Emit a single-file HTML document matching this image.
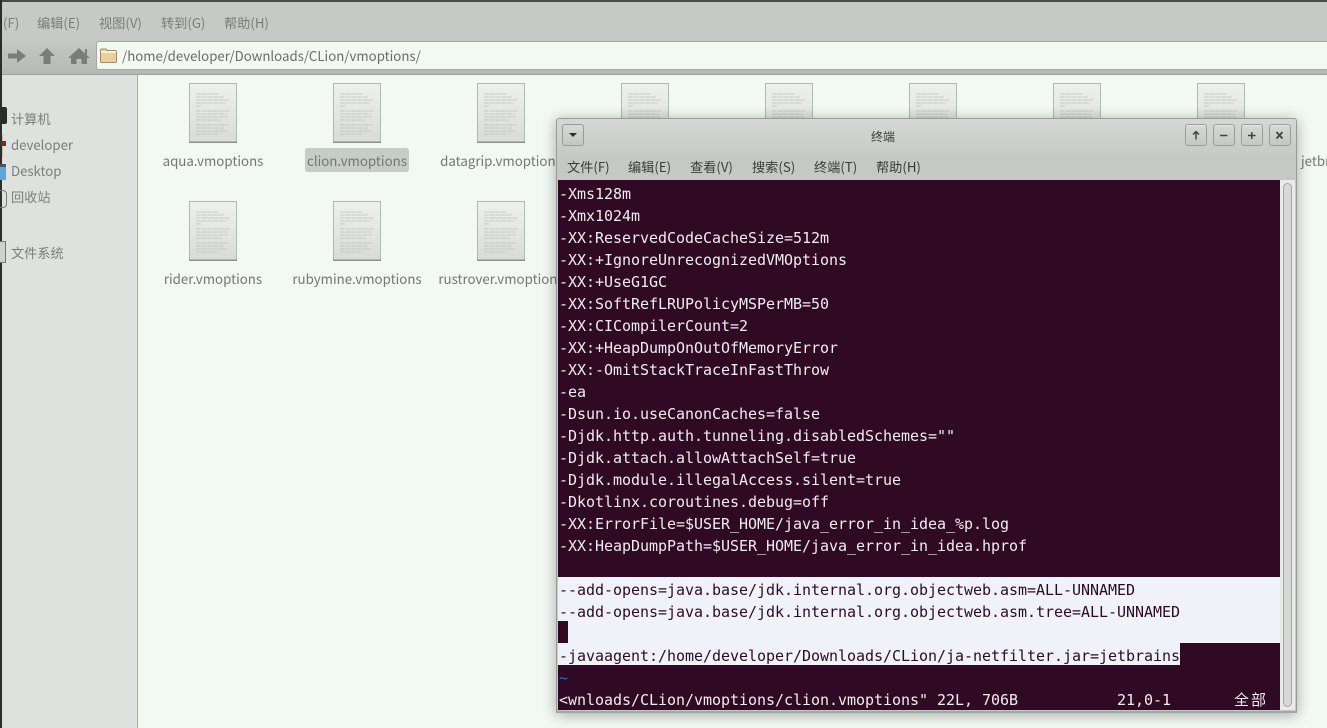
<!DOCTYPE html>
<html><head><meta charset="utf-8"><style>
html,body{margin:0;padding:0;width:1327px;height:728px;overflow:hidden;background:#f2f8f2;font-family:"Noto Sans CJK SC","Liberation Sans",sans-serif}
div,span,svg{position:absolute}
#root{left:0;top:0;width:1327px;height:728px;overflow:hidden;filter:blur(.3px)}
.t{white-space:nowrap;line-height:20px}
.m{font-size:13.2px;color:#7a7d7a;top:13px}
.lbl{font-size:13.3px;color:#747774;width:144px;text-align:center;white-space:nowrap;line-height:20px}
.side{font-size:13.2px;color:#7b7e7b;left:11px;white-space:nowrap;line-height:20px}
.tm{font-size:13.2px;color:#3c3c3c;top:157px;white-space:nowrap;line-height:20px}
.btn{top:124px;width:20px;height:20px;border:1px solid #9a9d9a;border-radius:3px;background:linear-gradient(#d6d9d6,#c4c7c4);box-shadow:inset 0 1px 0 #e6e8e6}
.l{left:559px;height:22px;line-height:22px;font-family:"DejaVu Sans Mono",monospace;font-size:15px;letter-spacing:-.03px;color:#eeeeec;white-space:pre}
.d{color:#300a24}
</style></head><body>
<svg width="0" height="0" style="left:0;top:0"><defs>
<linearGradient id="dg" x1="0" y1="0" x2="0" y2="1"><stop offset="0" stop-color="#eef0ec"/><stop offset="1" stop-color="#d9dbd8"/></linearGradient>
<symbol id="doc" viewBox="0 0 48 60">
<rect x=".5" y=".5" width="47" height="59" fill="url(#dg)" stroke="#b4b6b3"/>
<rect x="0" y="58.500" width="48" height="1.500" fill="#8d908c"/>
<g stroke="#bcbebb" stroke-width=".7" stroke-dasharray="5 .7">
<path d="M7 11H30M7 14H35M7 17H40M7 20H37M7 23H13M7 28H40M7 31H38M7 34H39M7 37H32M7 42H40M7 45H35M7 48H38M7 51H29"/>
</g></symbol></defs></svg>
<div id="root">
<!-- window chrome -->
<div style="left:0;top:0;width:1327px;height:2px;background:#4a4a48"></div>
<div style="left:2px;top:2px;width:1325px;height:36px;background:#c6c9c6"></div>
<div style="left:2px;top:38px;width:1325px;height:36px;background:linear-gradient(#c6c9c6,#b5b8b5)"></div>
<div style="left:2px;top:74px;width:1325px;height:1px;background:#9fa29f"></div>
<div style="left:0;top:0;width:2px;height:728px;background:#2d2d2d"></div>
<div class="t m" style="left:3px">(F)</div>
<div class="t m" style="left:37px">编辑(E)</div>
<div class="t m" style="left:99px">视图(V)</div>
<div class="t m" style="left:161px">转到(G)</div>
<div class="t m" style="left:224px">帮助(H)</div>

<svg style="left:6px;top:46px" width="84" height="20" viewBox="0 0 84 20" fill="#7a7d7a">
<path d="M2 7.500H11V3L20 10 11 17V12.500H2Z"/>
<path d="M41 2L49 10H44.500V18H37.500V10H33Z"/>
<path d="M73 2L79 7.500V3H81V9.500L84 12H81V18H75.500V13H70.500V18H65V12H62Z"/>
</svg>
<div style="left:96px;top:41px;width:1240px;height:27px;background:#f2f8f2;border:1px solid #a5a8a5;border-radius:3px"></div>
<svg style="left:100px;top:48px" width="17" height="15" viewBox="0 0 17 15">
<path d="M.5 2.500Q.5 1 2 1H6L7.500 2.500H15Q16.500 2.500 16.500 4V13.500Q16.500 14.500 15 14.500H2Q.5 14.500.5 13.500Z" fill="#ecd09c" stroke="#a28b66"/>
<rect x="1" y="3" width="15" height="2" fill="#f8f0e0"/>
</svg>
<div class="t" style="left:122px;top:46px;font-size:13.25px;color:#6a6d6a">/home/developer/Downloads/CLion/vmoptions/</div>

<!-- sidebar -->
<div style="left:2px;top:75px;width:135px;height:653px;background:#dfe1df"></div>
<div style="left:137px;top:75px;width:1px;height:653px;background:#a8aba8"></div>
<div style="left:0;top:107px;width:7px;height:17px;background:#2c2c2c;border-radius:0 2px 2px 0"></div>
<div style="left:2px;top:135px;width:1px;height:22px;background:#c7b9a0"></div>
<div style="left:1px;top:141px;width:5px;height:5px;background:#7a2b22"></div>
<div style="left:0;top:164px;width:6px;height:16px;background:#58a9d9;border-top:3px solid #4d5358;box-sizing:border-box"></div>
<div style="left:-3px;top:190px;width:8px;height:16px;border:1px solid #777;border-radius:4px"></div>
<div style="left:0;top:241px;width:6px;height:22px;background:#cfd1cf;border:1px solid #777;border-left:0;box-sizing:border-box"></div>
<div class="side" style="top:109px">计算机</div>
<div class="side" style="top:135px">developer</div>
<div class="side" style="top:161px">Desktop</div>
<div class="side" style="top:187px">回收站</div>
<div class="side" style="top:243px">文件系统</div>

<!-- files -->
<svg style="left:189px;top:83px" width="48" height="60"><use href="#doc"/></svg>
<svg style="left:333px;top:83px" width="48" height="60"><use href="#doc"/></svg>
<svg style="left:477px;top:83px" width="48" height="60"><use href="#doc"/></svg>
<svg style="left:621px;top:83px" width="48" height="60"><use href="#doc"/></svg>
<svg style="left:765px;top:83px" width="48" height="60"><use href="#doc"/></svg>
<svg style="left:909px;top:83px" width="48" height="60"><use href="#doc"/></svg>
<svg style="left:1053px;top:83px" width="48" height="60"><use href="#doc"/></svg>
<svg style="left:1197px;top:83px" width="48" height="60"><use href="#doc"/></svg>
<svg style="left:189px;top:201px" width="48" height="60"><use href="#doc"/></svg>
<svg style="left:333px;top:201px" width="48" height="60"><use href="#doc"/></svg>
<svg style="left:477px;top:201px" width="48" height="60"><use href="#doc"/></svg>
<div style="left:305px;top:148px;width:104px;height:24px;background:#c6ccc6;border-radius:3px"></div>
<div class="lbl" style="left:141px;top:151px">aqua.vmoptions</div>
<div class="lbl" style="left:285px;top:151px">clion.vmoptions</div>
<div class="lbl" style="left:429px;top:151px">datagrip.vmoptions</div>
<div class="lbl" style="left:141px;top:269px">rider.vmoptions</div>
<div class="lbl" style="left:285px;top:269px">rubymine.vmoptions</div>
<div class="lbl" style="left:429px;top:269px">rustrover.vmoptions</div>
<div class="t" style="left:1301px;top:151px;font-size:13.3px;color:#747774">jetbrains</div>

<!-- terminal -->
<div style="left:556px;top:118px;width:739px;height:592px;border:1px solid #989b98;border-bottom:2px solid #a4a7a4;border-radius:3px 3px 0 0;background:linear-gradient(#d5d8d5 0,#c5c8c5 40px,#c5c8c5 62px);box-shadow:0 2px 14px rgba(0,0,0,.32)"></div>
<div style="left:562px;top:124px;width:20px;height:20px;border:1px solid #9a9d9a;border-radius:3px;background:linear-gradient(#d6d9d6,#c4c7c4)"></div>
<svg style="left:568px;top:132px" width="10" height="6"><path d="M1 1H9L5 5Z" fill="#2e2e2e"/></svg>
<div class="t" style="left:871px;top:127px;font-size:12px;color:#3c3c3c">终端</div>
<div class="btn" style="left:1185px"></div>
<div class="btn" style="left:1213px"></div>
<div class="btn" style="left:1241px"></div>
<div class="btn" style="left:1269px"></div>
<svg style="left:1185px;top:124px" width="106" height="22" viewBox="0 0 106 22" fill="none" stroke="#444" stroke-width="1.500">
<path d="M11 15.500V7.500M8 10.500L11 7.500 14 10.500"/>
<path d="M35 11.500H42.500"/>
<path d="M63 11.500H70.500M66.800 8V15"/>
<path d="M91.500 8L97.500 14.500M97.500 8L91.500 14.500" stroke-width="1.800"/>
</svg>
<div class="tm" style="left:567px">文件(F)</div>
<div class="tm" style="left:628px">编辑(E)</div>
<div class="tm" style="left:690px">查看(V)</div>
<div class="tm" style="left:752px">搜索(S)</div>
<div class="tm" style="left:814px">终端(T)</div>
<div class="tm" style="left:876px">帮助(H)</div>

<div style="left:558px;top:180px;width:722px;height:530px;background:#300a24"></div>
<div style="left:1280px;top:180px;width:15px;height:530px;background:#e9ebe9"></div>
<div style="left:1283px;top:183px;width:9px;height:524px;border:1px solid #a2a5a2;border-radius:5px;box-sizing:border-box;background:#d6d9d6"></div>
<div style="left:558px;top:577px;width:722px;height:66px;background:#eff3f9"></div>
<div style="left:558px;top:621px;width:10px;height:22px;background:#300a24"></div>
<div style="left:558px;top:643px;width:622px;height:22px;background:#eff3f9"></div>

<div class="l" style="top:183px">-Xms128m</div>
<div class="l" style="top:205px">-Xmx1024m</div>
<div class="l" style="top:227px">-XX:ReservedCodeCacheSize=512m</div>
<div class="l" style="top:249px">-XX:+IgnoreUnrecognizedVMOptions</div>
<div class="l" style="top:271px">-XX:+UseG1GC</div>
<div class="l" style="top:293px">-XX:SoftRefLRUPolicyMSPerMB=50</div>
<div class="l" style="top:315px">-XX:CICompilerCount=2</div>
<div class="l" style="top:337px">-XX:+HeapDumpOnOutOfMemoryError</div>
<div class="l" style="top:359px">-XX:-OmitStackTraceInFastThrow</div>
<div class="l" style="top:381px">-ea</div>
<div class="l" style="top:403px">-Dsun.io.useCanonCaches=false</div>
<div class="l" style="top:425px">-Djdk.http.auth.tunneling.disabledSchemes=""</div>
<div class="l" style="top:447px">-Djdk.attach.allowAttachSelf=true</div>
<div class="l" style="top:469px">-Djdk.module.illegalAccess.silent=true</div>
<div class="l" style="top:491px">-Dkotlinx.coroutines.debug=off</div>
<div class="l" style="top:513px">-XX:ErrorFile=$USER_HOME/java_error_in_idea_%p.log</div>
<div class="l" style="top:535px">-XX:HeapDumpPath=$USER_HOME/java_error_in_idea.hprof</div>
<div class="l d" style="top:579px">--add-opens=java.base/jdk.internal.org.objectweb.asm=ALL-UNNAMED</div>
<div class="l d" style="top:601px">--add-opens=java.base/jdk.internal.org.objectweb.asm.tree=ALL-UNNAMED</div>
<div class="l d" style="top:645px">-javaagent:/home/developer/Downloads/CLion/ja-netfilter.jar=jetbrains</div>
<div class="l" style="top:667px;color:#2a6fc4">~</div>
<div class="l" style="top:689px">&lt;wnloads/CLion/vmoptions/clion.vmoptions" 22L, 706B</div>
<div class="l" style="top:689px;left:1117px">21,0-1</div>
<div class="l" style="top:689px;left:1234px;font-family:'DejaVu Sans Mono','Noto Sans CJK SC',monospace;letter-spacing:2px">全部</div>
</div>
</body></html>
